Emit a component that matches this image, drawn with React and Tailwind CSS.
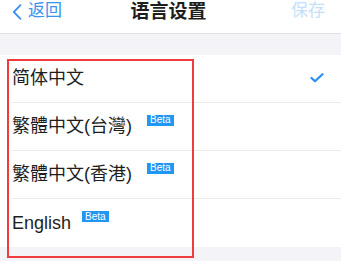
import React from "react";

const font = { fontFamily: '"Liberation Sans", "Noto Sans CJK SC", sans-serif' };

function Badge({ wide }) {
  return (
    <span
      className={`${wide ? "ml-[15px]" : "ml-[11px]"} -mt-[13px] inline-flex h-[11px] items-center bg-[#2196f3] px-[3px] text-[10px] leading-none text-white`}
    >
      Beta
    </span>
  );
}

function Row({ label, beta, wide, checked, last }) {
  return (
    <div className="flex h-[48px] items-center pl-[12px]">
      <div
        className={`flex h-full flex-1 items-center pr-[17px] ${last ? "" : "border-b border-[#ebebeb]"}`}
      >
        <span className="text-[18px] text-[#1e1e1e]">{label}</span>
        {beta && <Badge wide={wide} />}
        <div className="flex-1" />
        {checked && (
          <svg width="14" height="10" viewBox="0 0 14 10" className="-mt-[2px]">
            <polyline
              points="1.5,5 5,8.3 12.5,1.2"
              fill="none"
              stroke="#2a8ef0"
              strokeWidth="2.2"
              strokeLinecap="round"
              strokeLinejoin="round"
            />
          </svg>
        )}
      </div>
    </div>
  );
}

export default function App() {
  return (
    <div className="relative h-[261px] w-[341px] overflow-hidden bg-[#f4f4f8]" style={font}>
      <div className="grid h-[34px] grid-cols-[1fr_auto_1fr] items-start border-b border-[#e2e2e6] bg-white px-[12px] pt-[1px]">
        <div className="flex items-center">
          <svg width="10" height="16" viewBox="0 0 10 16" className="mt-[1px]">
            <polyline
              points="8.5,1.2 1.8,8 8.5,14.8"
              fill="none"
              stroke="#3a93ee"
              strokeWidth="1.8"
              strokeLinecap="round"
              strokeLinejoin="round"
            />
          </svg>
          <span className="ml-[6px] text-[17px] leading-[20px] text-[#3a93ee]">返回</span>
        </div>
        <span className="-ml-[4px] text-[19px] font-bold leading-[22px] text-[#1e1e1e]">语言设置</span>
        <span className="justify-self-end pr-[4px] text-[17px] leading-[20px] text-[#c5e0f8]">保存</span>
      </div>
      <div className="h-[21px]" />
      <div className="bg-white">
        <Row label="简体中文" checked />
        <Row label="繁體中文(台灣)" beta wide />
        <Row label="繁體中文(香港)" beta wide />
        <Row label="English" beta last />
      </div>
      <div className="absolute left-[7px] top-[59px] h-[199px] w-[187px] border-2 border-[#f03c3c]" />
    </div>
  );
}
